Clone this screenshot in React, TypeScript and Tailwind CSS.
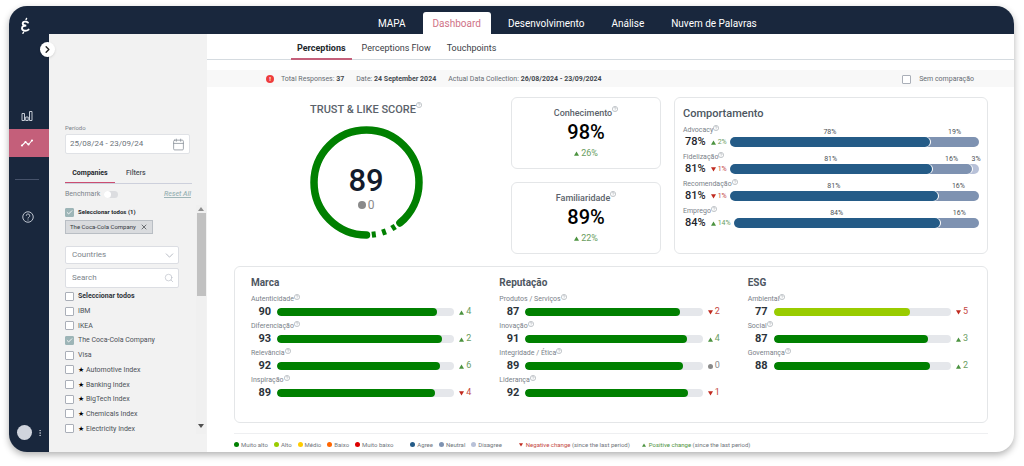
import { useState } from 'react'
import { Calendar, Check, ChevronDown, ChevronRight, EllipsisVertical, Search, X } from 'lucide-react'
import clsx from 'clsx'

interface Score {
  label: string
  value: number
  delta: number
}

interface ScoreGroup {
  title: string
  scores: Score[]
}

interface Behaviour {
  label: string
  delta: number
  parts: number[]
}

const navTabs = ['MAPA', 'Dashboard', 'Desenvolvimento', 'Análise', 'Nuvem de Palavras']

const views = ['Perceptions', 'Perceptions Flow', 'Touchpoints']

const companies = [
  { name: 'IBM', index: false },
  { name: 'IKEA', index: false },
  { name: 'The Coca-Cola Company', index: false },
  { name: 'Visa', index: false },
  { name: 'Automotive Index', index: true },
  { name: 'Banking Index', index: true },
  { name: 'BigTech Index', index: true },
  { name: 'Chemicals Index', index: true },
  { name: 'Electricity Index', index: true },
]

const behaviours: Behaviour[] = [
  { label: 'Advocacy', delta: 2, parts: [78, 19] },
  { label: 'Fidelização', delta: -1, parts: [81, 16, 3] },
  { label: 'Recomendação', delta: -1, parts: [81, 16] },
  { label: 'Emprego', delta: 14, parts: [84, 16] },
]

const groups: ScoreGroup[] = [
  {
    title: 'Marca',
    scores: [
      { label: 'Autenticidade', value: 90, delta: 4 },
      { label: 'Diferenciação', value: 93, delta: 2 },
      { label: 'Relevância', value: 92, delta: 6 },
      { label: 'Inspiração', value: 89, delta: -4 },
    ],
  },
  {
    title: 'Reputação',
    scores: [
      { label: 'Produtos / Serviços', value: 87, delta: -2 },
      { label: 'Inovação', value: 91, delta: 4 },
      { label: 'Integridade / Ética', value: 89, delta: 0 },
      { label: 'Liderança', value: 92, delta: -1 },
    ],
  },
  {
    title: 'ESG',
    scores: [
      { label: 'Ambiental', value: 77, delta: -5 },
      { label: 'Social', value: 87, delta: 3 },
      { label: 'Governança', value: 88, delta: 2 },
    ],
  },
]

const levelLegend = [
  { label: 'Muito alto', color: 'bg-[#008000]' },
  { label: 'Alto', color: 'bg-[#99cc00]' },
  { label: 'Médio', color: 'bg-[#ffcc00]' },
  { label: 'Baixo', color: 'bg-[#ff6600]' },
  { label: 'Muito baixo', color: 'bg-[#dd0000]' },
]

const agreeLegend = [
  { label: 'Agree', color: 'bg-[#245b87]' },
  { label: 'Neutral', color: 'bg-[#7e92b1]' },
  { label: 'Disagree', color: 'bg-[#b8c1d8]' },
]

const partColors = ['bg-[#245b87]', 'bg-[#7e92b1]', 'bg-[#b8c1d8]']

function Logo() {
  return (
    <svg viewBox="0 0 12 18" className="h-[18px] w-3" fill="none" stroke="white" strokeLinecap="round">
      <path d="M9 5.600C7.600 4.200 3.800 4.200 3.700 6.500c0 1.700 1.800 2.100 3.600 2.100-2.400 0-4.300.6-4.300 2.700 0 3 4.600 3 6.600 1.300" strokeWidth="1.900" />
      <path d="M7 2.600 7.600 1.400M4.600 15.200l-.7 1.200" strokeWidth="1.300" />
    </svg>
  )
}

function HelpIcon({ className }: { className: string }) {
  return (
    <svg viewBox="0 0 24 24" className={className} fill="none" stroke="currentColor" strokeWidth="2">
      <circle cx="12" cy="12" r="10.500" />
      <path d="M8.500 9.500a3.500 3.500 0 1 1 5.200 3c-1.200.7-1.700 1.200-1.700 2.500M12 17v2" />
    </svg>
  )
}

function BarsIcon() {
  return (
    <svg viewBox="0 0 12 12" className="size-3" fill="none" stroke="#c5cbd5" strokeWidth="1">
      <path d="M1 3.500h2.500v7H1zM4.700 7h2.500v3.500H4.700zM8.500 1.500H11v9H8.500z" />
    </svg>
  )
}

function TrendIcon() {
  return (
    <svg viewBox="0 0 14 10" className="h-[10px] w-[14px]" fill="none" stroke="white" strokeWidth="1.100">
      <path d="M2 7.500 5.500 4l3 2.500L12 2.500" />
      <g fill="white" stroke="none">
        <circle cx="2" cy="7.500" r="1.100" />
        <circle cx="5.500" cy="4" r="1.100" />
        <circle cx="8.500" cy="6.500" r="1.100" />
        <circle cx="12" cy="2.500" r="1.100" />
      </g>
    </svg>
  )
}

function Info({ className = 'align-[1px]' }: { className?: string }) {
  return <HelpIcon className={clsx('-mt-[6px] inline size-[6px] text-[#8d949c]', className)} />
}

function Marker({ delta, className = 'size-[5px]' }: { delta: number; className?: string }) {
  return (
    <svg viewBox="0 0 10 10" className={clsx('shrink-0', className)}>
      {delta > 0 && <path d="M5 1 10 9.500H0z" fill="#4c9340" />}
      {delta < 0 && <path d="M0 .5h10L5 9z" fill="#c02b20" />}
      {delta === 0 && <circle cx="5" cy="5" r="5" fill="#8a8a8a" />}
    </svg>
  )
}

function Delta({ value, unit = '', className }: { value: number; unit?: string; className?: string }) {
  return (
    <span
      className={clsx(
        'flex items-center gap-[2px]',
        value > 0 && 'text-[#6a9d61]',
        value < 0 && 'text-[#c4483f]',
        value === 0 && 'text-[#8a8a8a]',
        className
      )}
    >
      <Marker delta={value} />
      {Math.abs(value)}
      {unit}
    </span>
  )
}

function CheckBox({ id, checked, onChange }: { id: string; checked: boolean; onChange: () => void }) {
  return (
    <span className="relative flex size-[9px] shrink-0">
      <input
        id={id}
        type="checkbox"
        checked={checked}
        onChange={onChange}
        className="size-[9px] appearance-none rounded-[1px] border border-[#aaafb8] bg-white checked:border-[#9db5b7] checked:bg-[#9db5b7]"
      />
      {checked && <Check className="pointer-events-none absolute inset-px size-[7px] text-white" strokeWidth={3} />}
    </span>
  )
}

function Rail() {
  return (
    <aside className="flex w-10 shrink-0 flex-col bg-[#19273d] pt-[11px]">
      <div className="ml-[10px]">
        <Logo />
      </div>
      <nav className="mt-[68px] flex flex-col">
        <button type="button" aria-label="Map" className="flex h-[26px] items-center justify-center pr-1">
          <BarsIcon />
        </button>
        <button type="button" aria-label="Trends" className="flex h-7 items-center justify-center bg-[#c45f7a] pr-1">
          <TrendIcon />
        </button>
        <hr className="mt-[22px] ml-[6px] w-6 border-[#46526a]" />
        <button type="button" aria-label="Help" className="mt-[31px] flex justify-center pr-[2px] text-[#bcc3ce]">
          <HelpIcon className="size-3" />
        </button>
      </nav>
      <div className="mt-auto mb-3 ml-2 flex items-center gap-1">
        <span className="size-[15px] rounded-full bg-[#d0d4dd]" />
        <button type="button" aria-label="Account menu">
          <EllipsisVertical className="size-2 text-[#d0d4dd]" />
        </button>
      </div>
    </aside>
  )
}

function FilterPanel() {
  const [selected, setSelected] = useState<string[]>(['The Coca-Cola Company'])
  const [period, setPeriod] = useState('25/08/24 - 23/09/24')
  const [search, setSearch] = useState('')
  const [allSelected, setAllSelected] = useState(true)
  const [allCompanies, setAllCompanies] = useState(false)

  const toggle = (name: string) => {
    setSelected(selected.includes(name) ? selected.filter(item => item !== name) : [...selected, name])
  }

  return (
    <aside className="relative w-[158px] shrink-0 bg-[#f2f2f2] pt-[89px] pl-4 text-[7px] leading-[10px] text-[#4b5157]">
      <button
        type="button"
        aria-label="Expand menu"
        className="absolute top-2 -left-[9px] z-10 flex size-[15px] items-center justify-center rounded-full bg-white text-[#222] shadow-sm"
      >
        <ChevronRight className="size-[11px]" strokeWidth={3} />
      </button>

      <div className="mr-[17px]">
        <label htmlFor="period" className="block text-[6px] leading-[10px] text-[#7d848b]">
          Período
        </label>
        <div className="mt-px flex h-5 items-center rounded-[2px] border border-[#e0e2e6] bg-white pr-1 pl-1">
          <input
            id="period"
            value={period}
            onChange={e => setPeriod(e.target.value)}
            className="w-full min-w-0 text-[8px] text-[#6b727a] outline-none"
          />
          <Calendar className="size-[13px] shrink-0 text-[#8b939b]" strokeWidth={1.5} />
        </div>
      </div>

      <div className="mt-[13px] mr-[15px] flex border-b border-[#cdd0dc]">
        <button type="button" className="-mb-px h-4 w-[50px] border-b border-[#cc4d70] pb-[3px] font-bold text-[#23272c]">
          Companies
        </button>
        <button type="button" className="ml-[11px] h-4 pb-1 font-medium">
          Filters
        </button>
      </div>

      <div className="mt-[5px] mr-4 flex items-center">
        <label htmlFor="benchmark" className="mr-1 text-[#7d848b]">
          Benchmark
        </label>
        <input
          id="benchmark"
          type="checkbox"
          role="switch"
          className="flex h-[7px] w-[14px] appearance-none rounded-full bg-[#dcdde0] before:size-[7px] before:rounded-full before:bg-white checked:bg-[#9db5b7] checked:before:ml-auto"
        />
        <button type="button" className="ml-auto font-medium text-[#9db5b7] italic underline">
          Reset All
        </button>
      </div>

      <div className="mt-[6px] flex h-[229px]">
        <div className="flex-1 overflow-hidden">
          <div className="mt-[2px] flex items-center gap-1">
            <CheckBox id="all-selected" checked={allSelected} onChange={() => setAllSelected(!allSelected)} />
            <label htmlFor="all-selected" className="text-[6px] font-bold text-[#23272c]">
              Seleccionar todos (1)
            </label>
          </div>
          <span className="mt-[3px] inline-flex h-[14px] items-center gap-1 border border-[#b9bec4] bg-[#d9dbde] px-1 text-[6px] text-[#33383d]">
            The Coca-Cola Company
            <button type="button" aria-label="Remove The Coca-Cola Company">
              <X className="size-2" />
            </button>
          </span>

          <div className="relative mt-3 mr-[17px]">
            <select
              aria-label="Countries"
              className="block h-[18px] w-full appearance-none rounded-[2px] border border-[#dcdee3] bg-white pl-[6px] text-[8px] text-[#7d848b]"
            >
              <option>Countries</option>
            </select>
            <ChevronDown className="pointer-events-none absolute top-[3px] right-[3px] size-[13px] text-[#a7adb8]" strokeWidth={1.5} />
          </div>
          <div className="mt-1 mr-[17px] flex h-5 items-center rounded-[2px] border border-[#dcdee3] bg-white pr-1 pl-[6px]">
            <input
              type="search"
              aria-label="Search"
              placeholder="Search"
              value={search}
              onChange={e => setSearch(e.target.value)}
              className="w-full min-w-0 text-[8px] outline-none placeholder:text-[#7d848b]"
            />
            <Search className="size-[10px] shrink-0 text-[#b5bac4]" strokeWidth={1.5} />
          </div>

          <ul className="mt-px grid h-[147px] auto-rows-fr leading-[8px]">
            <li className="flex items-center gap-1">
              <CheckBox id="all" checked={allCompanies} onChange={() => setAllCompanies(!allCompanies)} />
              <label htmlFor="all" className="font-bold text-[#2f3439]">
                Seleccionar todos
              </label>
            </li>
            {companies.map(company => (
              <li key={company.name} className="flex items-center gap-1">
                <CheckBox id={company.name} checked={selected.includes(company.name)} onChange={() => toggle(company.name)} />
                <label htmlFor={company.name} className="flex gap-[2px]">
                  {company.index && <span className="text-black">★</span>}
                  {company.name}
                </label>
              </li>
            ))}
          </ul>
        </div>
        <div className="mr-px flex w-[10px] flex-col items-center bg-[#f0f0f0]">
          <span className="py-[2px]">
            <svg viewBox="0 0 6 4" className="h-1 w-[6px]" fill="#8f8f8f">
              <path d="M3 0 6 4H0z" />
            </svg>
          </span>
          <span className="h-[83px] w-[9px] bg-[#c1c1c1]" />
          <svg viewBox="0 0 6 4" className="mt-auto mb-[6px] h-1 w-[6px]" fill="#505050">
            <path d="M0 0h6L3 4z" />
          </svg>
        </div>
      </div>
    </aside>
  )
}

function InfoBar() {
  const [noComparison, setNoComparison] = useState(false)

  return (
    <div className="mt-[10px] flex h-[17px] items-center bg-[#f8f8f8] pt-px pr-10 pl-[59px] text-[7px] text-[#676d73]">
      <span className="mr-[7px] flex size-2 items-center justify-center rounded-full bg-[#ee3d3d] text-[6px] leading-none font-bold text-white">
        !
      </span>
      <span>
        Total Responses: <b className="font-bold text-[#44494f]">37</b>
      </span>
      <span className="ml-3">
        Date: <b className="font-bold text-[#44494f]">24 September 2024</b>
      </span>
      <span className="ml-3">
        Actual Data Collection: <b className="font-bold text-[#44494f]">26/08/2024 - 23/09/2024</b>
      </span>
      <div className="ml-auto flex items-center gap-2">
        <CheckBox id="no-comparison" checked={noComparison} onChange={() => setNoComparison(!noComparison)} />
        <label htmlFor="no-comparison">Sem comparação</label>
      </div>
    </div>
  )
}

function TrustScore({ value }: { value: number }) {
  const gap = 360 - value * 3.6

  return (
    <section className="flex min-w-0 flex-1 flex-col items-center pt-[5px]">
      <h2 className="text-[11px] leading-4 font-medium text-[#5b636b]">
        TRUST &amp; LIKE SCORE
        <Info className="align-super" />
      </h2>
      <div className="relative mt-2 size-[113px]">
        <svg viewBox="-56.5 -56.5 113 113" className="size-full" fill="none" stroke="#008000">
          <circle
            r="52.500"
            pathLength="360"
            strokeWidth="7.500"
            strokeLinecap="round"
            strokeDasharray={`${360 - gap} ${gap}`}
            transform="rotate(90)"
          />
          {[8, 19.5, 31].map(angle => (
            <path key={angle} d="M0 49.500v6" strokeWidth="4" transform={`rotate(${-angle})`} />
          ))}
        </svg>
        <div className="absolute inset-0 flex flex-col items-center justify-center pt-3">
          <span className="text-[31px] leading-8 font-medium text-[#131b2b]">{value}</span>
          <span className="flex items-center gap-[2px] text-[12px] leading-4 text-[#8a8a8a]">
            <Marker delta={0} className="size-2" />0
          </span>
        </div>
      </div>
    </section>
  )
}

function KpiCard({ label, value, delta }: { label: string; value: number; delta: number }) {
  return (
    <section className="flex h-[72px] flex-col items-center rounded-[6px] border border-[#e4e6e8] pt-[9px]">
      <h3 className="text-[9px] leading-3 font-medium text-[#5b636b]">
        {label}
        <Info className="align-super" />
      </h3>
      <span className="mt-[3px] text-[20px] leading-5 font-medium text-black">{value}%</span>
      <Delta value={delta} unit="%" className="mt-[5px] text-[9px] leading-3" />
    </section>
  )
}

function BehaviourRow({ label, delta, parts }: Behaviour) {
  return (
    <li className="flex h-[27px] items-end gap-[3px]">
      <div>
        <p className="w-0 text-[7px] leading-[10px] whitespace-nowrap text-[#7a8189]">
          {label}
          <Info />
        </p>
        <div className="flex h-[14px] items-center gap-[5px] pl-[2px]">
          <span className="text-[11px] font-medium text-[#1e242b]">{parts[0]}%</span>
          <Delta value={delta} unit="%" className="text-[7px]" />
        </div>
      </div>
      <div className="mb-[2px] flex min-w-0 flex-1">
        {parts.map((part, i) => (
          <div key={i} className="min-w-0 basis-0" style={{ flexGrow: part, zIndex: parts.length - i }}>
            <p className="text-center text-[7px] leading-[9px] text-[#4b4f55]">{part}%</p>
            <div className={clsx('flex', i > 0 && '-ml-[10px]')}>
              <div
                className={clsx(
                  'h-[10px] flex-1 rounded-r-full',
                  i === 0 && 'rounded-l-full',
                  i < parts.length - 1 && 'shadow-[1px_0_0_#fff]',
                  partColors[i]
                )}
              />
            </div>
          </div>
        ))}
      </div>
    </li>
  )
}

function ScoreRow({ label, value, delta }: Score) {
  return (
    <li className="h-[27px]">
      <p className="text-[7px] leading-3 text-[#7a8189]">
        {label}
        <Info />
      </p>
      <div className="flex h-[14px] items-center">
        <span className="w-5 text-right text-[11px] font-bold text-[#2c333a]">{value}</span>
        <div className="ml-[6px] h-2 flex-1 overflow-hidden rounded-full bg-[#e5e7eb]">
          <div
            className={clsx('h-full rounded-full', value >= 80 ? 'bg-[#008000]' : 'bg-[#99cc00]')}
            style={{ width: `${value}%` }}
          />
        </div>
        <Delta value={delta} className="ml-[5px] w-[15px] text-[9px]" />
      </div>
    </li>
  )
}

function Legend() {
  return (
    <footer className="mt-[10px] flex h-[19px] items-center gap-[17px] border-t border-[#eeeff1] pt-[3px] text-[6px] text-[#6f757b]">
      {[levelLegend, agreeLegend].map((items, i) => (
        <ul key={i} className="flex gap-[6px]">
          {items.map(item => (
            <li key={item.label} className="flex items-center gap-[2px]">
              <span className={clsx('size-[5px] rounded-full', item.color)} />
              {item.label}
            </li>
          ))}
        </ul>
      ))}
      <ul className="flex gap-3">
        <li className="flex items-center gap-[3px]">
          <Marker delta={-1} className="size-1" />
          <span>
            <span className="text-[#c4483f]">Negative change</span> (since the last period)
          </span>
        </li>
        <li className="flex items-center gap-[3px]">
          <Marker delta={1} className="size-1" />
          <span>
            <span className="text-[#4c9340]">Positive change</span> (since the last period)
          </span>
        </li>
      </ul>
    </footer>
  )
}

export default function App() {
  const [tab, setTab] = useState('Dashboard')
  const [view, setView] = useState('Perceptions')

  return (
    <div className="flex min-h-screen bg-white pt-[6px] pr-[10px] pb-[14px] pl-[9px] font-['Roboto',sans-serif]">
      <div className="flex flex-1 overflow-hidden rounded-[18px] bg-white shadow-[0_3px_7px_rgba(0,0,0,0.3)]">
        <Rail />
        <div className="flex min-w-0 flex-1 flex-col">
          <header className="flex h-7 items-end gap-[7px] bg-[#19273d] pl-[319px]">
            {navTabs.map(item => (
              <button
                key={item}
                type="button"
                onClick={() => setTab(item)}
                className={clsx(
                  'h-[22px] rounded-t-[3px] px-[10px] text-[10px] whitespace-nowrap',
                  tab === item ? 'bg-white text-[#cf7287]' : 'text-white'
                )}
              >
                {item}
              </button>
            ))}
          </header>

          <div className="flex flex-1">
            <FilterPanel />
            <main className="flex min-w-0 flex-1 flex-col">
              <nav className="flex h-[26px] items-end gap-1 border-b border-[#d5dbe0] pl-[84px]">
                {views.map(item => (
                  <button
                    key={item}
                    type="button"
                    onClick={() => setView(item)}
                    className={clsx(
                      '-mb-px h-5 border-b-2 px-[6px] pb-px text-[9px]',
                      view === item ? 'border-[#c45f7a] font-bold text-[#23272c]' : 'border-transparent text-[#3b4046]'
                    )}
                  >
                    {item}
                  </button>
                ))}
              </nav>
              <InfoBar />

              <div className="flex flex-1 flex-col pt-[10px] pr-[26px] pl-[27px]">
                <div className="flex gap-[13px]">
                  <TrustScore value={89} />
                  <div className="flex w-[150px] flex-col gap-[13px]">
                    <KpiCard label="Conhecimento" value={98} delta={26} />
                    <KpiCard label="Familiaridade" value={89} delta={22} />
                  </div>
                  <section className="w-[314px] rounded-[6px] border border-[#e4e6e8] px-2 pt-2">
                    <h2 className="text-[11px] leading-4 font-medium text-[#4d565f]">Comportamento</h2>
                    <ul>
                      {behaviours.map(item => (
                        <BehaviourRow key={item.label} {...item} />
                      ))}
                    </ul>
                  </section>
                </div>

                <section className="mt-3 grid h-[157px] grid-cols-3 gap-[25px] rounded-[6px] border border-[#e4e6e8] px-4 pt-2">
                  {groups.map(group => (
                    <div key={group.title}>
                      <h2 className="mb-[2px] text-[10px] leading-4 font-bold text-[#4d565f]">{group.title}</h2>
                      <ul>
                        {group.scores.map(score => (
                          <ScoreRow key={score.label} {...score} />
                        ))}
                      </ul>
                    </div>
                  ))}
                </section>

                <Legend />
              </div>
            </main>
          </div>
        </div>
      </div>
    </div>
  )
}
